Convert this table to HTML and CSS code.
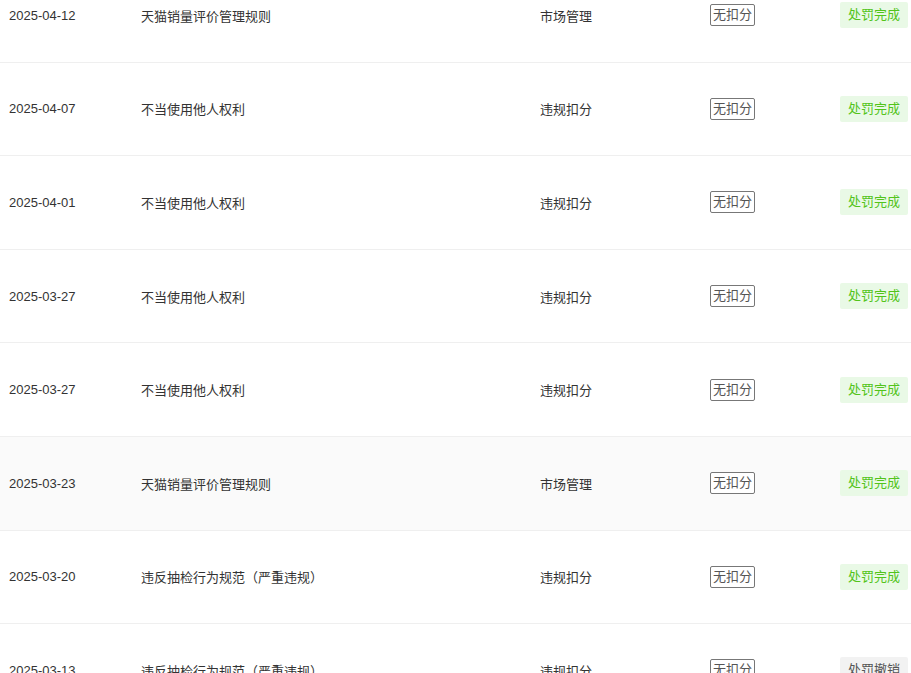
FILE: index.html
```html
<!DOCTYPE html>
<html lang="zh">
<head>
<meta charset="utf-8">
<link rel="stylesheet" href="styles.css">
</head>
<body>
<div class="table">
  <div class="row">
    <div class="date">2025-04-12</div>
    <div class="rule">天猫销量评价管理规则</div>
    <div class="type">市场管理</div>
    <div><span class="tag">无扣分</span></div>
    <div><span class="status done">处罚完成</span></div>
  </div>
  <div class="row">
    <div class="date">2025-04-07</div>
    <div class="rule">不当使用他人权利</div>
    <div class="type">违规扣分</div>
    <div><span class="tag">无扣分</span></div>
    <div><span class="status done">处罚完成</span></div>
  </div>
  <div class="row">
    <div class="date">2025-04-01</div>
    <div class="rule">不当使用他人权利</div>
    <div class="type">违规扣分</div>
    <div><span class="tag">无扣分</span></div>
    <div><span class="status done">处罚完成</span></div>
  </div>
  <div class="row">
    <div class="date">2025-03-27</div>
    <div class="rule">不当使用他人权利</div>
    <div class="type">违规扣分</div>
    <div><span class="tag">无扣分</span></div>
    <div><span class="status done">处罚完成</span></div>
  </div>
  <div class="row">
    <div class="date">2025-03-27</div>
    <div class="rule">不当使用他人权利</div>
    <div class="type">违规扣分</div>
    <div><span class="tag">无扣分</span></div>
    <div><span class="status done">处罚完成</span></div>
  </div>
  <div class="row hover">
    <div class="date">2025-03-23</div>
    <div class="rule">天猫销量评价管理规则</div>
    <div class="type">市场管理</div>
    <div><span class="tag">无扣分</span></div>
    <div><span class="status done">处罚完成</span></div>
  </div>
  <div class="row">
    <div class="date">2025-03-20</div>
    <div class="rule">违反抽检行为规范（严重违规）</div>
    <div class="type">违规扣分</div>
    <div><span class="tag">无扣分</span></div>
    <div><span class="status done">处罚完成</span></div>
  </div>
  <div class="row">
    <div class="date">2025-03-13</div>
    <div class="rule">违反抽检行为规范（严重违规）</div>
    <div class="type">违规扣分</div>
    <div><span class="tag">无扣分</span></div>
    <div><span class="status revoked">处罚撤销</span></div>
  </div>
</div>
</body>
</html>
```

FILE: styles.css
```css
html, body {
  margin: 0;
  padding: 0;
  background: #fff;
  overflow: hidden;
}
body {
  font-family: "Liberation Sans", "Noto Sans CJK SC", sans-serif;
  font-size: 13px;
  color: #333;
}
.table {
  margin-top: -31px;
}
.row {
  box-sizing: border-box;
  height: 93.6px;
  border-bottom: 1px solid #efefef;
  display: grid;
  grid-template-columns: 132px 399px 170px 130px 1fr;
  align-items: center;
  padding-left: 9px;
  background: #fff;
}
.row.hover {
  background: #fafafa;
}
.date {
  font-family: "Liberation Sans", Arial, sans-serif;
  color: #333;
}
.rule, .type {
  color: #333;
}
.tag {
  display: inline-block;
  box-sizing: border-box;
  height: 22px;
  line-height: 20px;
  padding: 0 2px;
  border: 1px solid #777;
  border-radius: 2px;
  color: #555;
  background: #fff;
}
.status {
  display: inline-block;
  height: 26px;
  line-height: 26px;
  padding: 0 8px;
  border-radius: 2px;
}
.status.done {
  background: #e9f9e6;
  color: #52c41a;
}
.status.revoked {
  background: #f2f2f2;
  color: #555;
}
```
